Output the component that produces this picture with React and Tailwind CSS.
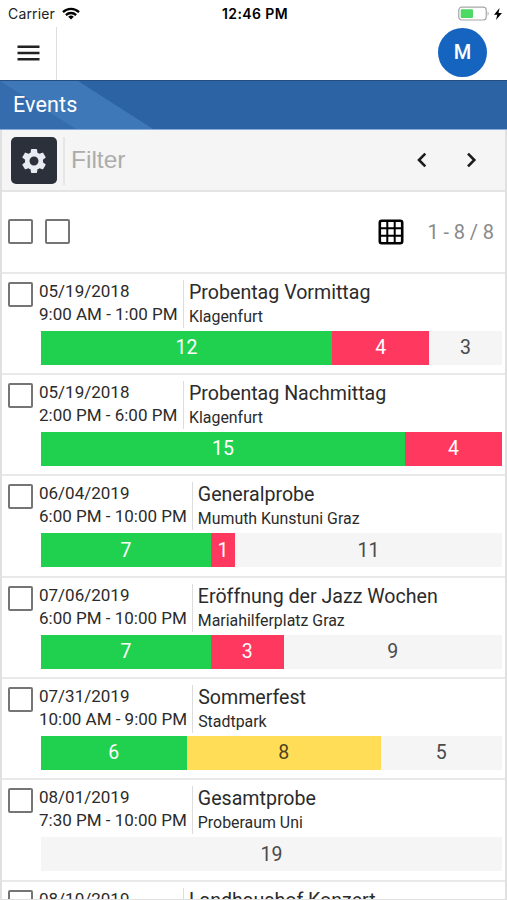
import React from 'react';
import { MdSettings } from 'react-icons/md';

const EVENTS = [
  { id: 1, date: '05/19/2018', time: '9:00 AM - 1:00 PM', title: 'Probentag Vormittag', place: 'Klagenfurt', yes: 12, no: 4, maybe: 0, open: 3 },
  { id: 2, date: '05/19/2018', time: '2:00 PM - 6:00 PM', title: 'Probentag Nachmittag', place: 'Klagenfurt', yes: 15, no: 4, maybe: 0, open: 0 },
  { id: 3, date: '06/04/2019', time: '6:00 PM - 10:00 PM', title: 'Generalprobe', place: 'Mumuth Kunstuni Graz', yes: 7, no: 1, maybe: 0, open: 11 },
  { id: 4, date: '07/06/2019', time: '6:00 PM - 10:00 PM', title: 'Eröffnung der Jazz Wochen', place: 'Mariahilferplatz Graz', yes: 7, no: 3, maybe: 0, open: 9 },
  { id: 5, date: '07/31/2019', time: '10:00 AM - 9:00 PM', title: 'Sommerfest', place: 'Stadtpark', yes: 6, no: 0, maybe: 8, open: 5 },
  { id: 6, date: '08/01/2019', time: '7:30 PM - 10:00 PM', title: 'Gesamtprobe', place: 'Proberaum Uni', yes: 0, no: 0, maybe: 0, open: 19 },
  { id: 7, date: '08/10/2019', time: '', title: 'Landhaushof Konzert', place: '', yes: 0, no: 0, maybe: 0, open: 0 },
];

const SEGMENTS = [
  { key: 'yes', className: 'bg-[#1fd14f] text-white' },
  { key: 'no', className: 'bg-[#ff3860] text-white' },
  { key: 'maybe', className: 'bg-[#ffdd57] text-[#4d4420]' },
  { key: 'open', className: 'bg-[#f5f5f5] text-[#4a4a4a]' },
];

const Checkbox = () => (
  <div className="w-[25px] h-[25px] shrink-0 rounded-[2px] border-2 border-[#757575] bg-white" />
);

const StatusBar = () => (
  <div className="flex h-[27px] shrink-0 items-center justify-between pl-2 pr-[5px] text-black font-['Inter','Liberation_Sans',sans-serif]">
    <div className="flex w-[150px] items-center gap-[7px]">
      <span className="text-[14px] leading-none text-[#222] tracking-[0.15px]">Carrier</span>
      <svg width="18" height="13" viewBox="0 0 18 13" fill="none" stroke="black" strokeWidth="2.3">
        <path d="M1 5.1a11.3 11.3 0 0 1 16 0" />
        <path d="M3.9 8.1a7.2 7.2 0 0 1 10.2 0" />
        <path d="M9 12.5 6.2 9.8a4 4 0 0 1 5.6 0z" fill="black" stroke="none" />
      </svg>
    </div>
    <span className="text-[14px] font-semibold leading-none tracking-[0.4px]">12:46 PM</span>
    <div className="flex w-[150px] items-center justify-end gap-1">
      <svg width="32" height="15" viewBox="0 0 32 15">
        <rect x="0.75" y="1.2" width="27.5" height="12.8" rx="3" fill="white" stroke="#a6a6a6" strokeWidth="1.2" />
        <rect x="2.7" y="3.2" width="12.3" height="8.8" rx="1" fill="#4cd964" />
        <path d="M29.6 5.4q2.2 2.2 0 4.4z" fill="#a6a6a6" />
      </svg>
      <svg width="8" height="12" viewBox="0 0 8 12">
        <path d="M5.6 0 0 6.7h3.3L2 12l6-7.1H4.5z" fill="black" />
      </svg>
    </div>
  </div>
);

const Header = () => (
  <div className="flex h-[53px] shrink-0 items-stretch justify-between">
    <div className="flex w-[57px] items-center justify-center border-r border-[#dedede] pb-[2px]">
      <svg width="23" height="16" viewBox="0 0 23 16" stroke="#222" strokeWidth="2.4">
        <path d="M0.5 1.8h22M0.5 8h22M0.5 14.2h22" />
      </svg>
    </div>
    <div className="mr-[20px] mt-[1px] flex h-[49px] w-[49px] items-center justify-center rounded-full bg-[#1565c0] pb-px text-[20px] font-medium text-white">
      M
    </div>
  </div>
);

const TitleBar = () => (
  <div className="relative h-[50px] shrink-0 border-b border-t border-b-[#86addb] border-t-[#254e80] bg-[#2c63a5]">
    <svg className="absolute left-0 top-0" width="160" height="48" viewBox="0 0 160 48">
      <path d="M0 0h78l75 48H0z" fill="#3f78b8" />
      <path d="M0 0 76 48H0z" fill="#346cae" />
    </svg>
    <div className="relative pl-[13px] text-[21.5px] leading-[48px] tracking-[0.15px] text-white">Events</div>
  </div>
);

const FilterBar = () => (
  <div className="flex h-[62px] shrink-0 items-center border-b-2 border-[#e4e4e4] bg-[#f5f5f5] pl-[9px] pr-[19px]">
    <div className="mt-px flex h-[47px] w-[46px] items-center justify-center rounded-[5px] bg-[#2b303b]">
      <MdSettings size={30} className="text-[#e8ebf2]" />
    </div>
    <div className="ml-[6px] mt-px h-[48px] w-[2px] bg-[#e6e6e6]" />
    <span className="ml-[6px] flex-1 font-['Liberation_Sans',sans-serif] text-[24.5px] text-[#acacac]">Filter</span>
    <svg width="60" height="16" viewBox="0 0 60 16" fill="none" stroke="#1c1c1c" strokeWidth="2.6" className="mr-[9px]">
      <path d="M8.3 1.7 2 8l6.3 6.3" />
      <path d="M51 1.7 57.3 8 51 14.3" />
    </svg>
  </div>
);

const Toolbar = () => (
  <div className="flex h-[79.5px] shrink-0 items-center gap-3 pl-[6px] pr-[11px]">
    <Checkbox />
    <Checkbox />
    <div className="ml-auto flex items-center">
      <svg width="26" height="26" viewBox="0 0 26 26" fill="none" stroke="black">
        <rect x="1.8" y="1.8" width="22.4" height="22.4" rx="2" strokeWidth="2.6" />
        <path d="M9.3 2v22M16.700 2v22M2 9.300h22M2 16.700h22" strokeWidth="2" />
      </svg>
      <span className="ml-[24px] text-[20px] tracking-[-0.1px] text-[#8a8a8a]">1 - 8 / 8</span>
    </div>
  </div>
);

const EventRow = ({ event }) => {
  const total = event.yes + event.no + event.maybe + event.open;
  return (
    <div className="h-[101.4px] shrink-0 border-t-2 border-[#e9e9e9] pl-[6px] pr-[3px] text-[#2b2b2b]">
      <div className="flex h-[57px] pt-[6px]">
        <div className="pt-[2px]">
          <Checkbox />
        </div>
        <div className="ml-[6px] min-w-[139px] whitespace-nowrap text-[17px] leading-[23px]">
          <div>{event.date}</div>
          <div>{event.time}</div>
        </div>
        <div className="ml-[5px] h-[48px] border-l border-[#dcdcdc] pl-[5px]">
          <div className="text-[19.6px] leading-[25px]">{event.title}</div>
          <div className="text-[15.9px] leading-[24px]">{event.place}</div>
        </div>
      </div>
      <div className="ml-[33px] flex h-[34px] text-[19.5px]">
        {SEGMENTS.filter(s => event[s.key] > 0).map(s => (
          <div
            key={s.key}
            className={`flex items-center justify-center ${s.className}`}
            style={{ width: `${(event[s.key] / total) * 100}%` }}
          >
            {event[s.key]}
          </div>
        ))}
      </div>
    </div>
  );
};

export default function App() {
  return (
    <div className="flex h-[900px] w-[507px] flex-col overflow-hidden bg-white font-['Roboto','Liberation_Sans',sans-serif]">
      <StatusBar />
      <Header />
      <TitleBar />
      <div className="flex min-h-0 flex-1 flex-col overflow-hidden border-x-2 border-b border-[#e0e0e0]">
        <FilterBar />
        <Toolbar />
        {EVENTS.map(event => (
          <EventRow key={event.id} event={event} />
        ))}
      </div>
    </div>
  );
}
